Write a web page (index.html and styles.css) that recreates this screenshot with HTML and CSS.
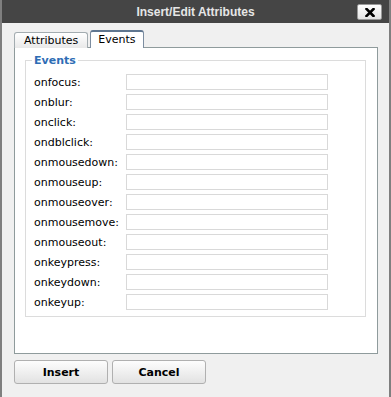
FILE: index.html
```html
<!DOCTYPE html>
<html lang="en">
<head>
    <meta charset="UTF-8">
    <title>Insert/Edit Attributes</title>
    <link rel="stylesheet" href="styles.css">
</head>
<body>
    <div class="window">
        <div class="titlebar">
            <span class="title">Insert/Edit Attributes</span>
            <button class="close">
                <svg width="10" height="9" viewBox="0 0 10 9">
                    <path d="M1.5 1 L8.5 8 M8.5 1 L1.5 8" stroke="#000" stroke-width="2.6" stroke-linecap="square"/>
                </svg>
            </button>
        </div>

        <div class="content">
            <div class="tabs">
                <span class="tab">Attributes</span>
                <span class="tab active">Events</span>
            </div>

            <div class="panel">
                <fieldset class="group">
                    <legend>Events</legend>
                    <div class="row"><label>onfocus:</label><input type="text"></div>
                    <div class="row"><label>onblur:</label><input type="text"></div>
                    <div class="row"><label>onclick:</label><input type="text"></div>
                    <div class="row"><label>ondblclick:</label><input type="text"></div>
                    <div class="row"><label>onmousedown:</label><input type="text"></div>
                    <div class="row"><label>onmouseup:</label><input type="text"></div>
                    <div class="row"><label>onmouseover:</label><input type="text"></div>
                    <div class="row"><label>onmousemove:</label><input type="text"></div>
                    <div class="row"><label>onmouseout:</label><input type="text"></div>
                    <div class="row"><label>onkeypress:</label><input type="text"></div>
                    <div class="row"><label>onkeydown:</label><input type="text"></div>
                    <div class="row"><label>onkeyup:</label><input type="text"></div>
                </fieldset>
            </div>

            <div class="buttons">
                <button class="btn">Insert</button>
                <button class="btn">Cancel</button>
            </div>
        </div>
    </div>
</body>
</html>
```

FILE: styles.css
```css
* {
    margin: 0;
    padding: 0;
    box-sizing: border-box;
}

body {
    background: #f0f0f0;
    font-family: 'DejaVu Sans', Verdana, sans-serif;
    font-size: 11px;
    color: #000;
}

.window {
    height: 397px;
    border-left: 2px solid #7f7f7f;
    border-right: 2px solid #7f7f7f;
    background: #f0f0f0;
}

.titlebar {
    position: relative;
    height: 23px;
    background: #454545;
    display: flex;
    align-items: center;
    justify-content: center;
}

.title {
    color: #e6e6e6;
    font-family: 'Liberation Sans', Arial, sans-serif;
    font-weight: bold;
    font-size: 12px;
}

.close {
    position: absolute;
    top: 4px;
    right: 7px;
    width: 25px;
    height: 16px;
    border: 1px solid #9a9a9a;
    border-radius: 2px;
    background: linear-gradient(#ffffff, #e4e4e4);
    display: flex;
    align-items: center;
    justify-content: center;
}

.close svg {
    display: block;
}

.content {
    padding: 8px 11px 0 12px;
}

.tabs {
    display: flex;
    gap: 2px;
    height: 17px;
    align-items: flex-end;
    position: relative;
    z-index: 1;
    margin-bottom: -1px;
}

.tab {
    height: 16px;
    padding: 0 9px;
    line-height: 15px;
    border: 1px solid #a3acb0;
    border-bottom: none;
    border-radius: 3px 3px 0 0;
    background: linear-gradient(#ffffff, #e9e9e9);
}

.tab.active {
    height: 18px;
    padding: 0 7px;
    background: #ffffff;
    border-color: #7c8da0;
    border-top: 2px solid #5f7690;
    line-height: 16px;
}

.panel {
    height: 307px;
    background: #fff;
    border: 1px solid #8f9b9c;
    padding: 6px 11px 0 10px;
}

.group {
    border: 1px solid #dcdcdc;
    padding: 5px 0 8px 8px;
    height: 263px;
}

.group legend {
    color: #2e6db5;
    font-weight: bold;
    padding: 0 2px;
    margin-left: -2px;
}

.row {
    display: flex;
    align-items: center;
    height: 20px;
}

.row label {
    width: 92px;
}

.row input {
    width: 202px;
    height: 16px;
    border: 1px solid #d9d9d9;
    background: #fff;
}

.buttons {
    display: flex;
    gap: 4px;
    margin-top: 6px;
}

.btn {
    width: 94px;
    height: 24px;
    border: 1px solid #b0b0b0;
    border-radius: 3px;
    background: linear-gradient(#fdfdfd, #e2e2e2);
    font-family: 'DejaVu Sans', Verdana, sans-serif;
    font-size: 11px;
    font-weight: bold;
    color: #000;
}
```
